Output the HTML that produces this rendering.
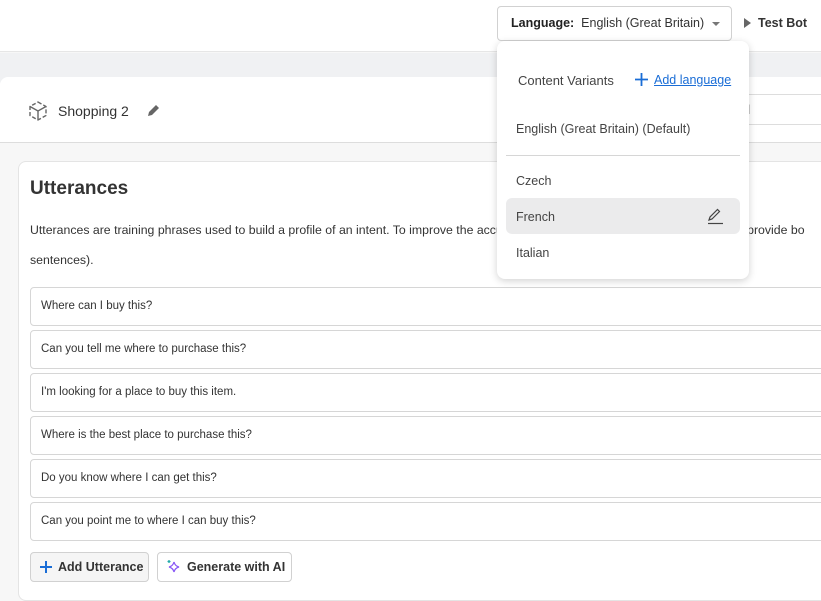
<!DOCTYPE html>
<html><head><meta charset="utf-8"><style>
*{box-sizing:border-box;margin:0;padding:0}
body{width:821px;height:596px;overflow:hidden;background:#f7f7f7;font-family:"Liberation Sans",sans-serif;color:#242424;position:relative}
.top{position:absolute;left:0;top:0;width:821px;height:52px;background:#fff;border-bottom:1px solid #e6e6e6}
.band{position:absolute;left:0;top:53px;width:821px;height:30px;background:#f0f1f3}
.card1{position:absolute;left:0;top:77px;width:830px;height:66px;background:#fff;border-radius:8px 0 0 0;border-bottom:1px solid #ddd}
.lang{position:absolute;left:497px;top:6px;width:235px;height:35px;border:1px solid #d1d1d1;border-radius:4px;background:#fff;font-size:12.5px;line-height:33px;padding-left:13px;color:#333}
.lang b{font-weight:bold;color:#222}
.caret{position:absolute;left:214px;top:15px;border-left:4px solid transparent;border-right:4px solid transparent;border-top:4px solid #777}
.test{position:absolute;left:744px;top:16px;font-size:12.5px;font-weight:bold;color:#333}
.test:before{content:"";display:inline-block;border-top:5px solid transparent;border-bottom:5px solid transparent;border-left:7px solid #666;margin-right:7px;vertical-align:-1px}
.shop{position:absolute;left:58px;top:103px;font-size:14px;color:#333}
.inp{position:absolute;left:720px;top:94px;width:110px;height:31px;border-top:1px solid #ddd;border-bottom:1px solid #ddd;font-size:13px;line-height:30px;color:#444;padding-left:20px}
.card2{position:absolute;left:18px;top:161px;width:820px;height:440px;background:#fff;border:1px solid #e4e4e4;border-radius:8px}
h1{position:absolute;left:30px;top:178px;font-size:19px;font-weight:bold;color:#333}
.desc{position:absolute;left:30px;top:215px;font-size:12.3px;line-height:30px;color:#333;width:800px;white-space:nowrap}
.row{position:absolute;left:30px;width:800px;height:39px;border:1px solid #d6d6d6;border-radius:4px;font-size:11.5px;line-height:37px;padding-left:10px;color:#333}
.btn{position:absolute;top:552px;height:30px;border:1px solid #d1d1d1;border-radius:4px;font-size:12.5px;font-weight:bold;line-height:28px;color:#333}
.dd{position:absolute;left:497px;top:41px;width:252px;height:238px;background:#fff;border-radius:8px;box-shadow:0 2px 8px rgba(0,0,0,.18)}
.dd .t{position:absolute;font-size:13px;color:#444}
.hl{position:absolute;left:9px;top:157px;width:234px;height:36px;background:#ebebec;border-radius:6px}
</style></head><body>
<div class="top"></div>
<div class="band"></div>
<div class="card1"></div>
<div class="lang"><b>Language:</b>&nbsp; English (Great Britain)<span class="caret"></span></div>
<div class="test">Test Bot</div>
<svg style="position:absolute;left:27px;top:100px" width="22" height="22" viewBox="0 0 22 22" fill="none" stroke="#666" stroke-width="1.4"><path d="M11 2l8 4.5v9L11 20l-8-4.5v-9z" stroke-dasharray="4 2"/><path d="M3 6.5l8 4.5 8-4.5M11 11v9"/></svg>
<div class="shop">Shopping 2</div>
<svg style="position:absolute;left:147px;top:103px" width="14" height="14" viewBox="0 0 14 14"><path d="M1 13l1-4 7-7 3 3-7 7z" fill="#666"/></svg>
<div class="inp">el</div>
<div class="card2"></div>
<h1>Utterances</h1>
<div class="desc">Utterances are training phrases used to build a profile of an intent. To improve the accuracy of your bot's understanding, you should provide bo<br>sentences).</div>
<div class="row" style="top:287px">Where can I buy this?</div>
<div class="row" style="top:330px">Can you tell me where to purchase this?</div>
<div class="row" style="top:373px">I'm looking for a place to buy this item.</div>
<div class="row" style="top:416px">Where is the best place to purchase this?</div>
<div class="row" style="top:459px">Do you know where I can get this?</div>
<div class="row" style="top:502px">Can you point me to where I can buy this?</div>
<div class="btn" style="left:30px;width:119px;background:#f5f5f5;padding-left:27px">Add Utterance
<svg style="position:absolute;left:9px;top:8px" width="12" height="12"><path d="M6 0v12M0 6h12" stroke="#1a6dd6" stroke-width="2"/></svg></div>
<div class="btn" style="left:157px;width:135px;background:#fff;padding-left:29px">Generate with AI
<svg style="position:absolute;left:8px;top:6px" width="16" height="16" viewBox="0 0 16 16" fill="none" stroke-width="1.3"><path d="M8 3q1 4 5 5q-4 1-5 5q-1-4-5-5q4-1 5-5z" stroke="#8b5cf6"/><path d="M3 1v3M1.5 2.5h3" stroke="#2aa"/></svg></div>
<div class="dd">
<div class="t" style="left:21px;top:32px">Content Variants</div>
<svg style="position:absolute;left:138px;top:32px" width="13" height="13"><path d="M6.5 0v13M0 6.5h13" stroke="#1a6dd6" stroke-width="1.8"/></svg>
<div class="t" style="left:157px;top:32px;color:#1a6dd6;text-decoration:underline;font-size:12.5px">Add language</div>
<div class="t" style="left:19px;top:81px;font-size:12.5px">English (Great Britain) (Default)</div>
<div style="position:absolute;left:9px;top:114px;width:234px;height:1px;background:#d6d6d6"></div>
<div class="t" style="left:19px;top:133px;font-size:12.5px">Czech</div>
<div class="hl"></div>
<div class="t" style="left:19px;top:169px;font-size:12.5px">French</div>
<svg style="position:absolute;left:210px;top:166px" width="18" height="18" viewBox="0 0 18 18" fill="none" stroke="#444" stroke-width="1.2"><path d="M2 13l1-3 7.5-7.5 2 2L5 12z"/><path d="M1 16.5h15"/></svg>
<div class="t" style="left:19px;top:205px;font-size:12.5px">Italian</div>
</div>
</body></html>
